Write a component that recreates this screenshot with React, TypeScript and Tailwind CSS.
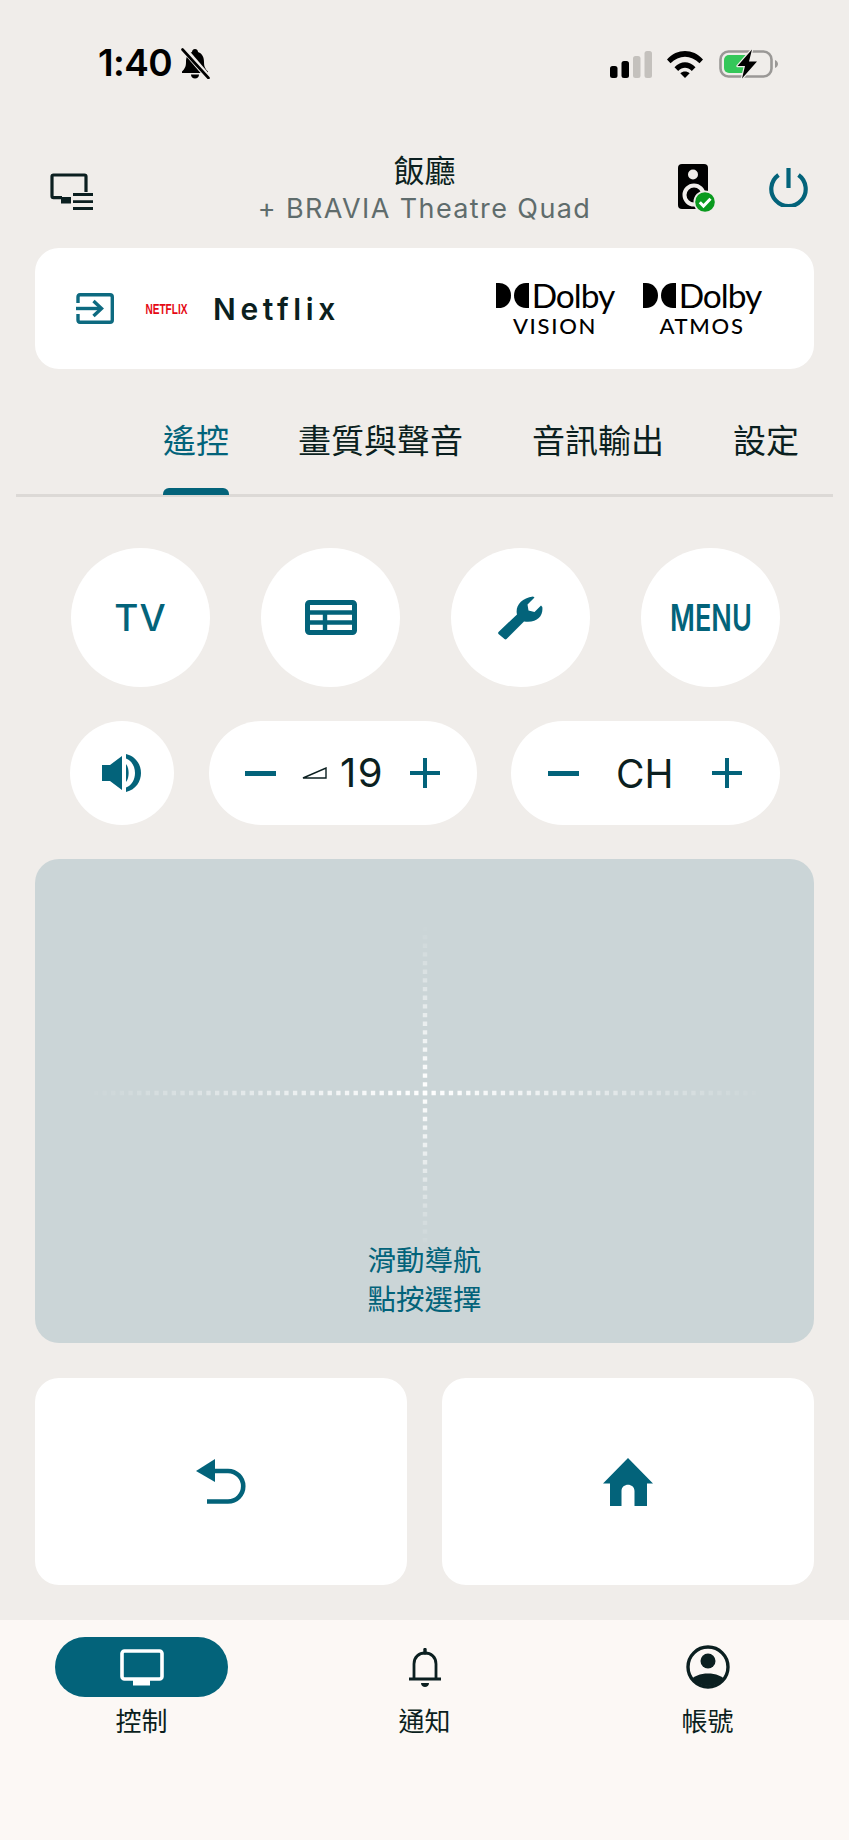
import React from "react";

const TEAL = "#03637a";

function Signal() {
  return (
    <svg width="42" height="27" viewBox="0 0 42 27">
      <rect x="0" y="15" width="7.5" height="12" rx="2.5" fill="#000" />
      <rect x="11.5" y="10" width="7.5" height="17" rx="2.5" fill="#000" />
      <rect x="23" y="5" width="7.5" height="22" rx="2.5" fill="#c4c1bd" />
      <rect x="34.5" y="0" width="7.5" height="27" rx="2.5" fill="#c4c1bd" />
    </svg>
  );
}

function Wifi() {
  return (
    <svg width="36" height="27" viewBox="0 0 36 27" fill="#000">
      <path d="M0 8.5C10-2.8 26-2.8 36 8.5L32.5 12.3C24 3.6 12 3.6 3.5 12.3Z" />
      <path d="M7.5 16.2C14 9.6 22 9.6 28.5 16.2L24.8 20C20.5 15.8 15.5 15.8 11.2 20Z" />
      <path d="M18 27L13.3 22.2C16 19.8 20 19.8 22.7 22.2Z" />
    </svg>
  );
}

function Battery() {
  return (
    <svg width="60" height="30" viewBox="0 0 60 30">
      <rect x="1.5" y="2.5" width="51" height="25" rx="8" fill="none" stroke="#9a9896" strokeWidth="2.6" />
      <path d="M56 11C58 12 59 13.5 59 15C59 16.5 58 18 56 19Z" fill="#9a9896" />
      <rect x="5" y="6" width="26" height="18" rx="5" fill="#34c759" />
      <path d="M33 0.5L18.5 17H26L23 29.5L38 12.5H30Z" fill="#000" stroke="#f0edea" strokeWidth="2.4" paintOrder="stroke" strokeLinejoin="round" />
    </svg>
  );
}

function BellSlash() {
  return (
    <svg width="30" height="31" viewBox="0 0 30 31">
      <path d="M15 1C17 1 18 2.5 18 4C22.5 5.5 24 9.5 24 14C24 18.5 25 20.5 28 23.5V25H2V23.5C5 20.5 6 18.5 6 14C6 9.5 7.5 5.5 12 4C12 2.5 13 1 15 1Z" fill="#000" />
      <path d="M11 26.5H19C19 29 17.2 30.5 15 30.5C12.8 30.5 11 29 11 26.5Z" fill="#000" />
      <path d="M3 0L28 29" stroke="#f0edea" strokeWidth="6" />
      <path d="M2.5 1.5L28.5 30" stroke="#000" strokeWidth="2.6" strokeLinecap="round" />
    </svg>
  );
}

function RemoteIcon() {
  return (
    <svg width="43" height="37" viewBox="0 0 43 37" fill="none">
      <path d="M36 19V3.5C36 2.6 35.4 2 34.5 2H3.5C2.6 2 2 2.6 2 3.5V23C2 24 2.6 24.6 3.5 24.6H12" stroke="#0b1f20" strokeWidth="3.2" />
      <rect x="11" y="24" width="10" height="6.5" fill="#0b1f20" />
      <path d="M23 21.5H43M23 28.7H43M23 35.5H43" stroke="#0b1f20" strokeWidth="2.8" />
    </svg>
  );
}

function SpeakerIcon() {
  return (
    <svg width="38" height="50" viewBox="0 0 38 50">
      <rect x="0" y="1" width="30" height="45" rx="4" fill="#000" />
      <circle cx="15" cy="11.5" r="5" fill="#f0edea" />
      <circle cx="16" cy="32" r="9.5" fill="none" stroke="#f0edea" strokeWidth="4" />
      <circle cx="27" cy="39" r="11.5" fill="#f0edea" />
      <circle cx="27" cy="39" r="9.8" fill="#0a9a1e" />
      <path d="M21.8 39.2L25.5 43L32.5 35.8" fill="none" stroke="#fff" strokeWidth="3" />
    </svg>
  );
}

function PowerIcon() {
  return (
    <svg width="39" height="39" viewBox="0 0 39 39" fill="none" stroke={TEAL} strokeWidth="4.2">
      <path d="M19.5 0V20" />
      <path d="M9.5 7A17.2 17.2 0 1 0 29.5 7" />
    </svg>
  );
}

function InputIcon() {
  return (
    <svg width="38" height="31" viewBox="0 0 38 31" fill="none" stroke="#0d6a80" strokeWidth="3.4">
      <path d="M2 10V4C2 2.6 2.6 1.7 4 1.7H34C35.4 1.7 36.3 2.6 36.3 4V27C36.3 28.4 35.4 29.3 34 29.3H4C2.6 29.3 2 28.4 2 27V21" />
      <path d="M0 15.5H25" />
      <path d="M17.5 8L25.5 15.5L17.5 23" />
    </svg>
  );
}

function DolbyMark() {
  return (
    <svg width="33" height="25" viewBox="0 0 33 25" fill="#000">
      <path d="M0 0H3C10 0 15 5.5 15 12.5C15 19.5 10 25 3 25H0Z" />
      <path d="M33 0H30C23 0 18 5.5 18 12.5C18 19.5 23 25 30 25H33Z" />
    </svg>
  );
}

function Dolby({ label }: { label: string }) {
  return (
    <div className="flex w-[120px] flex-col items-center">
      <div className="flex h-[30px] items-start">
        <DolbyMark />
        <span className="ml-[3px] font-['Lato',sans-serif] text-[33.5px] leading-[25px] tracking-[-1px] text-black">Dolby</span>
      </div>
      <span className="mt-[3px] font-['Lato',sans-serif] text-[22px] leading-[20px] font-medium tracking-[1.7px] text-black">{label}</span>
    </div>
  );
}

function TableIcon() {
  return (
    <svg width="52" height="35" viewBox="0 0 52 35" fill="none" stroke={TEAL}>
      <rect x="2.5" y="2.5" width="47" height="30" rx="2" strokeWidth="5" />
      <path d="M2 12.5H50M2 22.5H50" strokeWidth="4.4" />
      <path d="M20 12V33" strokeWidth="4.4" />
    </svg>
  );
}

function WrenchIcon() {
  return (
    <svg width="45" height="44" viewBox="0 0 45 44" fill={TEAL}>
      <path d="M0.5 36L19 18.5C17 10.5 23 2 35 0.5L36.5 1.5L29.5 8.5L30.5 14.5L36.5 16L43 9.5L44.3 11C45.5 20 39 27.5 26 25.5L8.5 43C8 43.6 7 43.6 6.5 43L0.5 38C0 37.5 0 36.5 0.5 36Z" />
    </svg>
  );
}

function VolumeIcon() {
  return (
    <svg width="40" height="38" viewBox="0 0 40 38" fill={TEAL}>
      <path d="M0 11H8L20 2V36L8 27H0Z" />
      <path d="M24 10C27.5 14 27.5 24 24 28Z" />
      <path d="M24 0C44 5 44 33 24 38V33.5C36 29 36 9 24 4.5Z" />
    </svg>
  );
}

function Minus() {
  return <div className="h-[5px] w-[31px] bg-[#03637a]" />;
}

function Plus() {
  return (
    <svg width="30" height="30" viewBox="0 0 30 30" stroke={TEAL} strokeWidth="4">
      <path d="M0 15H30M15 0V30" />
    </svg>
  );
}

function Crosshair() {
  return (
    <svg className="absolute inset-0" width="780" height="484" viewBox="0 0 780 484" fill="none">
      <defs>
        <linearGradient id="h" gradientUnits="userSpaceOnUse" x1="50" y1="0" x2="730" y2="0">
          <stop offset="0" stopColor="#fff" stopOpacity="0" />
          <stop offset="0.5" stopColor="#fff" stopOpacity="1" />
          <stop offset="1" stopColor="#fff" stopOpacity="0" />
        </linearGradient>
        <linearGradient id="v" gradientUnits="userSpaceOnUse" x1="0" y1="66" x2="0" y2="392">
          <stop offset="0" stopColor="#fff" stopOpacity="0" />
          <stop offset="0.5" stopColor="#fff" stopOpacity="1" />
          <stop offset="1" stopColor="#fff" stopOpacity="0" />
        </linearGradient>
      </defs>
      <path d="M50.09 234H730" stroke="url(#h)" strokeWidth="4.4" strokeDasharray="4.33 4.33" />
      <path d="M390 67.3V392" stroke="url(#v)" strokeWidth="4.4" strokeDasharray="4.33 4.33" />
    </svg>
  );
}

function BackIcon() {
  return (
    <svg width="50" height="45" viewBox="0 0 50 45" fill={TEAL}>
      <path d="M0 12L19 0V23Z" />
      <path d="M18 12H32A15 15 0 0 1 32 42.5H11" fill="none" stroke={TEAL} strokeWidth="4.6" />
    </svg>
  );
}

function HomeIcon() {
  return (
    <svg width="50" height="48" viewBox="0 0 50 48" fill={TEAL}>
      <path d="M25 0L50 25.5H44V48H31.5V33C31.5 24.5 18.5 24.5 18.5 33V48H7V25.5H0Z" />
    </svg>
  );
}

function TvNav() {
  return (
    <svg width="44" height="37" viewBox="0 0 44 37" fill="none">
      <rect x="2" y="2" width="40" height="28" rx="2.5" stroke="#fff" strokeWidth="3.6" />
      <rect x="13" y="31" width="17" height="5.5" fill="#fff" />
    </svg>
  );
}

function BellNav() {
  return (
    <svg width="32" height="39" viewBox="0 0 32 39" fill="none">
      <path d="M16 1.5V5" stroke="#0b1f20" strokeWidth="3.4" strokeLinecap="round" />
      <path d="M5 30V16C5 9 10 5 16 5C22 5 27 9 27 16V30" stroke="#0b1f20" strokeWidth="2.8" />
      <path d="M0 29.5H32V32.5H0Z" fill="#0b1f20" />
      <path d="M12 35H20C20 37.5 18 39 16 39C14 39 12 37.5 12 35Z" fill="#0b1f20" />
    </svg>
  );
}

function AccountNav() {
  return (
    <svg width="44" height="44" viewBox="0 0 44 44">
      <defs>
        <clipPath id="acc">
          <circle cx="22" cy="22" r="19" />
        </clipPath>
      </defs>
      <circle cx="22" cy="22" r="20" fill="none" stroke="#0b1f20" strokeWidth="3.4" />
      <circle cx="22" cy="16" r="7.5" fill="#0b1f20" />
      <path d="M4 44V36C10 26 34 26 40 36V44Z" fill="#0b1f20" clipPath="url(#acc)" />
    </svg>
  );
}

function RoundButton({ children }: { children: React.ReactNode }) {
  return <div className="flex h-[139px] w-[139px] items-center justify-center rounded-full bg-white">{children}</div>;
}

function NavItem({ label, children }: { label: string; children: React.ReactNode }) {
  return (
    <div className="flex flex-col items-center">
      <div className="flex h-[60px] items-center">{children}</div>
      <span className="mt-[8px] text-[26px] leading-[34px] text-[#0b1f20]">{label}</span>
    </div>
  );
}

export default function App() {
  return (
    <div className="flex h-[1840px] w-[849px] flex-col overflow-hidden bg-[#f0edea] font-[Inter,'Noto_Sans_CJK_TC',sans-serif]">
      {/* status bar */}
      <div className="flex h-[150px] items-start justify-between pt-[47px] pr-[70px] pl-[98px]">
        <div className="flex items-center gap-[8px]">
          <span className="text-[37px] leading-[32px] font-semibold tracking-[-0.6px] text-black">1:40</span>
          <BellSlash />
        </div>
        <div className="flex items-center gap-[15px] pt-[2px]">
          <Signal />
          <Wifi />
          <div className="ml-[1px]">
            <Battery />
          </div>
        </div>
      </div>

      {/* header */}
      <div className="grid h-[98px] grid-cols-[1fr_auto_1fr] items-start">
        <div className="pt-[23px] pl-[50px]">
          <RemoteIcon />
        </div>
        <div className="flex flex-col items-center">
          <span className="text-[31px] leading-[42px] text-[#0b1f20]">飯廳</span>
          <span className="text-[27px] leading-[34px] tracking-[1.4px] text-[#5f6c6c]">+ BRAVIA Theatre Quad</span>
        </div>
        <div className="flex items-start justify-end gap-[53px] pt-[13px] pr-[41px]">
          <SpeakerIcon />
          <div className="pt-[5px]">
            <PowerIcon />
          </div>
        </div>
      </div>

      {/* now playing card */}
      <div className="mx-[35px] flex h-[121px] items-center rounded-[24px] bg-white pr-[52px] pl-[41px]">
        <InputIcon />
        <span className="ml-[25px] w-[46px] scale-x-[0.72] text-center font-['Liberation_Sans',sans-serif] text-[14px] leading-[14px] font-bold whitespace-nowrap text-[#e50914]">NETFLIX</span>
        <span className="ml-[28px] text-[30px] leading-[36px] font-semibold tracking-[4.6px] text-[#0b1f20]">Netflix</span>
        <div className="ml-auto flex gap-[27px] pt-[2px]">
          <Dolby label="VISION" />
          <Dolby label="ATMOS" />
        </div>
      </div>

      {/* tabs */}
      <div className="relative mx-[16px] mt-[50px] flex h-[78px] gap-[69px] border-b-[3px] border-[#dcd9d6] pl-[147px] text-[33px] leading-[44px] text-[#0b1f20]">
        <div className="relative h-[76px] text-[#03637a]">
          遙控
          <div className="absolute right-0 bottom-0 left-0 h-[7px] rounded-t-[6px] bg-[#03637a]" />
        </div>
        <span>畫質與聲音</span>
        <span>音訊輸出</span>
        <span>設定</span>
      </div>

      {/* round buttons */}
      <div className="mt-[51px] flex gap-[51px] pl-[71px]">
        <RoundButton>
          <span className="text-[37px] leading-none font-medium tracking-[1px] text-[#03637a]">TV</span>
        </RoundButton>
        <RoundButton>
          <TableIcon />
        </RoundButton>
        <RoundButton>
          <WrenchIcon />
        </RoundButton>
        <RoundButton>
          <span className="scale-x-[0.73] text-[37px] leading-none font-semibold text-[#03637a]">MENU</span>
        </RoundButton>
      </div>

      {/* volume + channel */}
      <div className="mt-[34px] flex h-[104px] pl-[70px]">
        <div className="flex w-[104px] items-center justify-center rounded-full bg-white">
          <VolumeIcon />
        </div>
        <div className="ml-[35px] flex w-[268px] items-center rounded-full bg-white pl-[36px]">
          <Minus />
          <svg className="ml-[26px]" width="25" height="12" viewBox="0 0 25 12" fill="none" stroke="#0b1f20" strokeWidth="1.4">
            <path d="M1 11L24 1V11Z" />
          </svg>
          <span className="ml-[13px] text-[40px] leading-none tracking-[1.5px] text-[#0b1f20]">19</span>
          <div className="ml-[26px]">
            <Plus />
          </div>
        </div>
        <div className="ml-[34px] flex w-[269px] items-center rounded-full bg-white pl-[37px]">
          <Minus />
          <span className="ml-[37px] text-[39px] leading-none text-[#0b1f20]">CH</span>
          <div className="ml-[39px]">
            <Plus />
          </div>
        </div>
      </div>

      {/* touch pad */}
      <div className="relative mx-[35px] mt-[34px] flex h-[484px] flex-col items-center justify-end rounded-[24px] bg-[#cbd5d7] pb-[24px]">
        <Crosshair />
        <span className="relative text-[28.5px] leading-[39px] text-[#03637a]">滑動導航</span>
        <span className="relative text-[28.5px] leading-[39px] text-[#03637a]">點按選擇</span>
      </div>

      {/* back + home */}
      <div className="mx-[35px] mt-[35px] flex gap-[35px]">
        <div className="flex h-[207px] flex-1 items-center justify-center rounded-[24px] bg-white">
          <BackIcon />
        </div>
        <div className="flex h-[207px] flex-1 items-center justify-center rounded-[24px] bg-white">
          <HomeIcon />
        </div>
      </div>

      {/* bottom nav */}
      <div className="mt-[35px] grid flex-1 grid-cols-3 bg-[#fcf8f5] pt-[17px]">
        <NavItem label="控制">
          <div className="flex h-[60px] w-[173px] items-center justify-center rounded-full bg-[#03637a]">
            <TvNav />
          </div>
        </NavItem>
        <NavItem label="通知">
          <BellNav />
        </NavItem>
        <NavItem label="帳號">
          <AccountNav />
        </NavItem>
      </div>
    </div>
  );
}
